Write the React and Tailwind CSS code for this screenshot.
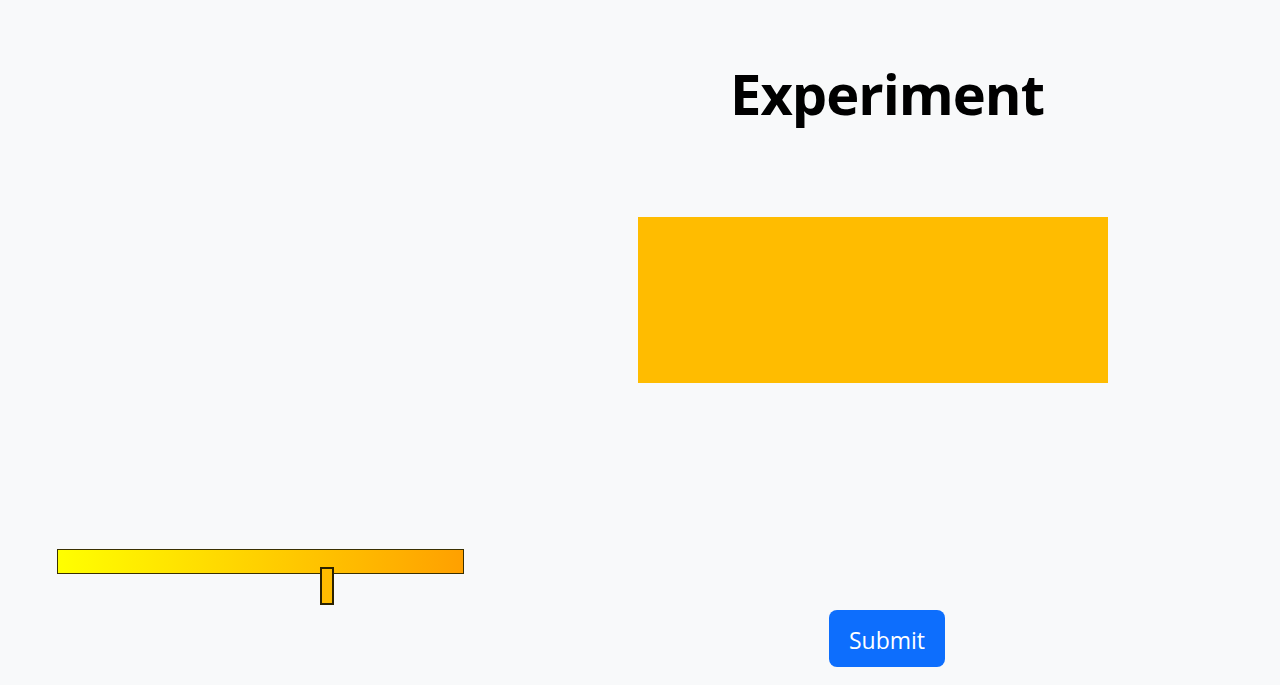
export default function App() {

  const fontStack = { fontFamily: "'Open Sans', 'Noto Sans', sans-serif" };

  return (

    <div
      className="min-h-[685px] w-full bg-[#f8f9fa] flex"
      style={fontStack}
    >

      {/* left: colour slider */}
      <div className="w-[638px] pt-[549px] pl-[57px]">

        <div className="relative w-[407px] h-[25px] border border-[#3a3000] bg-gradient-to-r from-[#ffff00] to-[#ffa000]">

          <div className="absolute left-[262px] top-[17px] w-[14px] h-[38px] border-2 border-[#2b2200] bg-[#ffbc00]" />

        </div>

      </div>

      {/* right: experiment panel */}
      <div className="w-[498px] flex flex-col">

        <h1 className="mt-[52px] text-center text-[56px] leading-[82px] font-bold text-black tracking-[-1px]">
          Experiment
        </h1>

        <div className="mt-[83px] w-[470px] h-[166px] bg-[#ffbc00]" />

        <div className="mt-[227px] flex justify-center">

          <button className="h-[57px] px-[20px] pt-[3px] rounded-[8px] bg-[#0d6efd] text-white text-[23px]">
            Submit
          </button>

        </div>

      </div>

    </div>

  );

}
